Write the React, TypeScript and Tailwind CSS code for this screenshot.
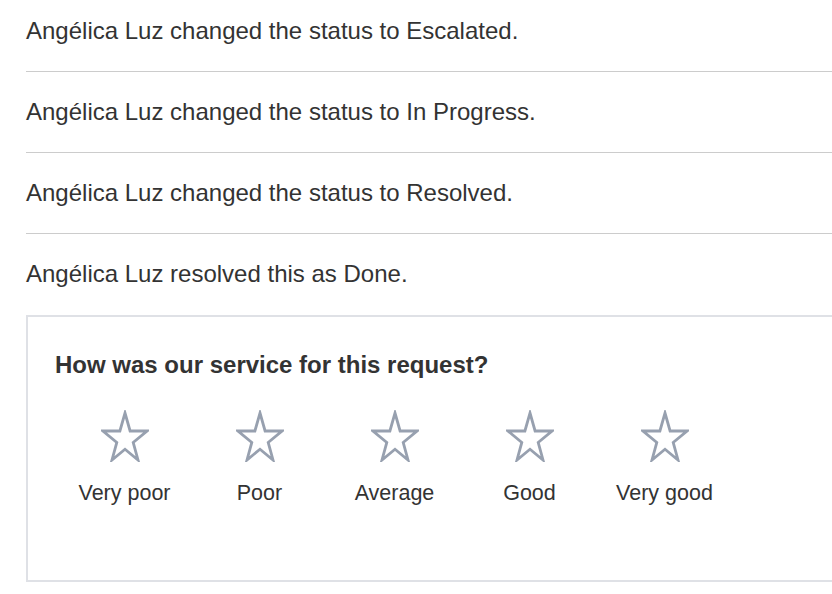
import React from 'react';

const events = [
  'Angélica Luz changed the status to Escalated.',
  'Angélica Luz changed the status to In Progress.',
  'Angélica Luz changed the status to Resolved.',
  'Angélica Luz resolved this as Done.',
];

const ratings = ['Very poor', 'Poor', 'Average', 'Good', 'Very good'];

const Star = () => (
  <svg width="48" height="52" viewBox="0 0 48 52" fill="none">
    <polygon
      points="24,3 29.1,21 46,21 32.2,32.4 37,50 24,39.2 11,50 15.8,32.4 2,21 18.9,21"
      stroke="#97a0af"
      strokeWidth="2.8"
      strokeLinejoin="miter"
      fill="#ffffff"
    />
  </svg>
);

const App = () => {
  return (
    <div className="w-[832px] h-[594px] overflow-hidden bg-white font-['Liberation_Sans',Arial,sans-serif] text-[#333333]">
      <div className="pl-[26px] w-[880px]">
        {/* Activity */}
        <div>
          {events.map((text, i) => (
            <div
              key={i}
              className={`text-[24px] leading-[36px] ${i === 0 ? 'pt-[13px]' : 'pt-[22px]'} ${
                i < events.length - 1 ? 'pb-[22px] border-b border-[#cccccc]' : 'pb-[23px]'
              }`}
            >
              {text}
            </div>
          ))}
        </div>

        {/* Feedback */}
        <div className="border-2 border-[#dfe1e6] pt-[30px] pl-[27px] pb-[72px]">
          <h3 className="text-[24px] leading-[36px] font-bold">How was our service for this request?</h3>
          <div className="flex mt-[27px] ml-[2px]">
            {ratings.map((label) => (
              <button key={label} className="w-[135px] flex flex-col items-center">
                <Star />
                <span className="mt-4 text-[21.5px] leading-[30px]">{label}</span>
              </button>
            ))}
          </div>
        </div>
      </div>
    </div>
  );
};

export default App;
